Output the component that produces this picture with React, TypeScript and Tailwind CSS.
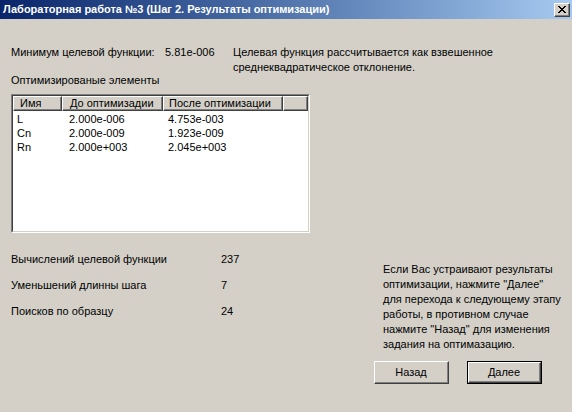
const FONT = "font-['Liberation_Sans',Arial,sans-serif]";

const ROWS = [
  { name: "L", before: "2.000e-006", after: "4.753e-003" },
  { name: "Cn", before: "2.000e-009", after: "1.923e-009" },
  { name: "Rn", before: "2.000e+003", after: "2.045e+003" },
];

const STATS = [
  { label: "Вычислений целевой функции", value: "237" },
  { label: "Уменьшений длинны шага", value: "7" },
  { label: "Поисков по образцу", value: "24" },
];

function HeaderCell({ children, width, pad }: { children?: React.ReactNode; width: string; pad: string }) {
  return (
    <div className={`${width} h-[15px] border-t border-l border-t-white border-l-white border-b border-r border-b-[#404040] border-r-[#404040] shrink-0`}>
      <div className={`h-full border-b border-r border-b-[#808080] border-r-[#808080] ${pad} leading-[13px]`}>
        {children}
      </div>
    </div>
  );
}

function WinButton({ label, isDefault }: { label: string; isDefault?: boolean }) {
  return (
    <button
      type="button"
      className={`w-[75px] h-[23px] bg-[#d4d0c8] text-[11px] text-black ${
        isDefault ? "border border-black" : ""
      }`}
    >
      <div className="h-full border-t border-l border-t-white border-l-white border-b border-r border-b-[#404040] border-r-[#404040]">
        <div className="h-full flex items-center justify-center border-b border-r border-b-[#808080] border-r-[#808080]">
          {label}
        </div>
      </div>
    </button>
  );
}

export default function App() {
  return (
    <div className={`w-[572px] h-[412px] bg-[#d4d0c8] text-black text-[11px] ${FONT} flex flex-col overflow-hidden`}>
      {/* Title bar */}
      <div className="h-[19px] shrink-0 flex items-center justify-between pl-[3px] pr-[2px] bg-gradient-to-r from-[#0a246a] to-[#a6caf0]">
        <span className="text-white font-bold text-[11px] leading-none whitespace-nowrap">
          Лабораторная работа №3 (Шаг 2. Результаты оптимизации)
        </span>
        <div className="w-[16px] h-[14px] bg-[#d4d0c8] border-t border-l border-t-white border-l-white border-b border-r border-b-[#404040] border-r-[#404040]">
          <div className="h-full flex items-center justify-center border-b border-r border-b-[#808080] border-r-[#808080]">
            <svg width="8" height="7" viewBox="0 0 8 7" shapeRendering="crispEdges">
              <path d="M0 0h2v1H0zM6 0h2v1H6zM1 1h2v1H1zM5 1h2v1H5zM2 2h4v1H2zM3 3h2v1H3zM2 4h4v1H2zM1 5h2v1H1zM5 5h2v1H5zM0 6h2v1H0zM6 6h2v1H6z" fill="#000" />
            </svg>
          </div>
        </div>
      </div>

      {/* Content */}
      <div className="flex flex-col pl-[11px]">
        <div className="flex mt-[26px] leading-[15px]">
          <div className="w-[154px] shrink-0">Минимум целевой функции:</div>
          <div className="w-[68px] shrink-0">5.81e-006</div>
          <div className="whitespace-nowrap">
            Целевая функция рассчитывается как взвешенное
            <br />
            среднеквадратическое отклонение.
          </div>
        </div>

        <div className="mt-[-2px] leading-[15px]">Оптимизированые элементы</div>

        {/* List view */}
        <div className="mt-[6px] w-[299px] h-[139px] border-t border-l border-t-[#808080] border-l-[#808080] border-b border-r border-b-white border-r-white">
          <div className="h-full bg-white border-t border-l border-t-[#404040] border-l-[#404040] border-b border-r border-b-[#d4d0c8] border-r-[#d4d0c8] flex flex-col">
            <div className="flex bg-[#d4d0c8]">
              <HeaderCell width="w-[49px]" pad="pl-[6px]">Имя</HeaderCell>
              <HeaderCell width="w-[101px]" pad="pl-[7px]">До оптимизадии</HeaderCell>
              <HeaderCell width="w-[120px]" pad="pl-[5px]">После оптимизации</HeaderCell>
              <HeaderCell width="flex-1" pad="" />
            </div>
            <div className="flex flex-col pt-[1px]">
              {ROWS.map((r) => (
                <div key={r.name} className="flex h-[14px] leading-[14px]">
                  <div className="w-[49px] pl-[4px]">{r.name}</div>
                  <div className="w-[101px] pl-[7px]">{r.before}</div>
                  <div className="w-[120px] pl-[5px]">{r.after}</div>
                </div>
              ))}
            </div>
          </div>
        </div>

        {/* Bottom section */}
        <div className="flex">
          <div className="w-[372px] shrink-0 flex flex-col gap-[11px] mt-[19px] leading-[15px]">
            {STATS.map((s) => (
              <div key={s.label} className="flex">
                <div className="w-[210px] shrink-0">{s.label}</div>
                <div>{s.value}</div>
              </div>
            ))}
          </div>
          <div className="mt-[29px] leading-[15px] whitespace-nowrap">
            Если Вас устраивают результаты
            <br />
            оптимизации, нажмите "Далее"
            <br />
            для перехода к следующему этапу
            <br />
            работы, в противном случае
            <br />
            нажмите "Назад" для изменения
            <br />
            задания на оптимазацию.
          </div>
        </div>

        <div className="flex justify-end gap-[18px] pr-[30px] mt-[9px]">
          <WinButton label="Назад" />
          <WinButton label="Далее" isDefault />
        </div>
      </div>
    </div>
  );
}
